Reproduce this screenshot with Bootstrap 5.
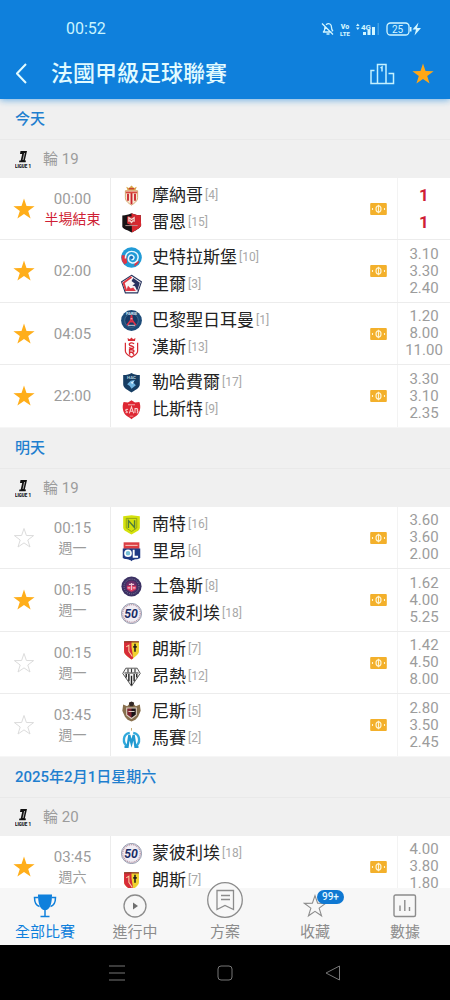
<!DOCTYPE html>
<html lang="zh-Hant">
<head>
<meta charset="utf-8">
<meta name="viewport" content="width=device-width, initial-scale=1">
<title>法國甲級足球聯賽</title>
<link href="https://cdn.jsdelivr.net/npm/bootstrap@5.3.0/dist/css/bootstrap.min.css" rel="stylesheet">
<style>
  :root { --brand:#0f80dc; --gold:#ffae1a; --muted:#9c9c9c; --rule:#ececec; }
  body { font-family: Roboto, "Noto Sans CJK TC", sans-serif; font-size:15px; line-height:20px; color:#222; background:#fff; }
  .screen { height:100vh; }
  button { background:none; border:0; padding:0; line-height:0; }
  svg { display:block; flex:none; }

  .app-head { background:var(--brand); box-shadow:0 1px 7px rgba(15,128,220,.6); z-index:2; padding-bottom:5px; }
  .status-line { padding:20px 28px 0 66px; height:54px; color:#c9f4ff; font-size:16px; line-height:18px; }
  .title-line { height:40px; padding:0 16px; color:#e2fbff; }
  .title-line h1 { font-size:22px; line-height:30px; font-weight:500; margin:0 0 0 24px; }
  .league-fav { color:#ffa716; }

  .feed { overflow-y:auto; scrollbar-width:none; min-height:0; }
  .feed::-webkit-scrollbar { display:none; }
  .day-name { height:41px; padding:0 15px; margin:0; background:#f0f0f0; border-bottom:1px solid #e9e9e9; color:#1f7fcf; font-size:15px; line-height:20px; font-weight:500; }
  .round-name { height:38px; padding:0 15px; background:#f0f0f0; color:var(--muted); }

  .match { height:62px; border-bottom:1px solid var(--rule); }
  .match:nth-child(even) { height:63px; }
  .match:last-child { border-bottom-color:#f6f6f6; }
  .fav { width:48px; color:var(--gold); }
  .fav svg { margin:auto; }
  .fav.unset { color:#dcdcdc; }
  .when { width:49px; color:var(--muted); white-space:nowrap; }
  .when small { font-size:14px; }
  .sides { border-left:1px solid var(--rule); margin-left:13px; padding-left:10px; line-height:27px; font-size:17px; }
  .side-name { margin-left:10px; }
  .rank { margin-left:2px; color:#a8a8a8; font-size:12px; }
  .odds { width:53px; margin-left:10px; border-left:1px solid #f3f3f3; color:var(--muted); line-height:17px; }
  .odds.score { font-size:17px; line-height:27px; font-weight:700; }
  .live, .odds.score { color:#cf1f35; }

  .tabs { height:57px; background:#f7f7f7; z-index:2; }
  .tabs a { color:#8c8c8c; text-decoration:none; padding-bottom:3px; }
  .tabs a.current { color:var(--brand); }
  .tabs svg { margin-bottom:4px; }
  .count { left:50%; top:2px; height:14px; margin-left:2px; padding:0 5px; border-radius:7px; background:#0f78d2; color:#e6f8ff; font-size:10px; line-height:14px; font-weight:500; }
  .sys { height:55px; background:#000; padding:0 63px; }
</style>
</head>
<body>

<svg class="d-none" aria-hidden="true">
  <symbol id="star" viewBox="0 0 22 22"><path fill="currentColor" d="M11 .5l2.500 7.500 8.100.2-6.400 4.800 2.400 7.600L11 15.900l-6.600 4.700 2.400-7.600L.4 8.200 8.500 8z"/></symbol>
  <symbol id="star-line" viewBox="0 0 22 22"><path fill="none" stroke="currentColor" d="M11 1.500l2.400 7 7.200.1-5.800 4.400 2.200 7L11 15.900 5 20l2.200-7L1.400 8.600l7.200-.1z"/></symbol>
  <symbol id="ticket" viewBox="0 0 18 13"><rect width="18" height="13" rx="1" fill="#f3b02b"/><ellipse cx="9" cy="6.500" rx="2.700" ry="3.300" fill="none" stroke="#fff3cf" stroke-width="1.300"/><path stroke="#fff3cf" stroke-width="1.200" d="M9 2v9M2.500 5.500v2M15.500 5.500v2"/></symbol>
  <symbol id="ligue" viewBox="0 0 16 18"><path fill="#111" d="M5.500 1H12L9.800 10.500H11l-.4 1.700H4l.4-1.700h1.300L7.200 4H5z"/><path stroke="#f0f0f0" stroke-width=".7" d="M9.600 3L8 10"/><text x="8" y="17.500" font-size="4.500" font-weight="900" text-anchor="middle" fill="#111">LIGUE 1</text></symbol>

  <symbol id="monaco" viewBox="0 0 24 24"><path fill="#d9a54a" d="M7.500 6L6 2l3 1.500L12 .5l3 3L18 2l-1.500 4z"/><path fill="#c83b31" d="M9 3.500h6v1.500H9z"/><path fill="#f6e6d3" stroke="#d0a060" d="M5 6.500h14v8c0 4-4 6.500-7 8.500-3-2-7-4.500-7-8.500z"/><path stroke="#c9252c" stroke-width="2.100" d="M8 10v8M12 9v13M16 10v8"/><path stroke="#d84b3e" stroke-width="2" d="M5.500 8.500h13"/></symbol>
  <symbol id="rennes" viewBox="0 0 24 24"><path fill="#161214" d="M1.500 4C6 4 8 3 12 1.500 16 3 18 4 22.500 3.500l.5 12C22 19 16 21 12.500 23.500 9 21 3.500 20 1.500 17z"/><path fill="#d92830" d="M12 1.500C16 3 18 4 22.500 3.500l.5 12C22 19 16 21 12.500 23.500z"/><path fill="#c92b32" d="M7 5h10v7l-5 3-5-2z"/><path fill="none" stroke="#f5d9d2" stroke-width="1.400" d="M9 11V6.500l3 2 3-2V11M10 9.500l2 2.500 2-2.500"/><path stroke="#b99" d="M5 15.500h14"/></symbol>
  <symbol id="strasbourg" viewBox="0 0 24 24"><circle cx="12" cy="12" r="11.800" fill="#219bd7"/><path fill="#df3544" d="M1 9l5 1 1 8-3 2C1 17 0 13 1 9zM16 17l5-1c-1 3-3 5-6 6z"/><path fill="none" stroke="#e8f6ff" stroke-width="1.700" d="M5 13c0-5 3-8 7-8 5 0 8 3 7.500 7.500C19 17 15 19 12 18c-3-1-4-3-3.500-5.500C9 10 11 8.500 13 9.500c2 1 2.500 3 1 4.500l-2 .5"/><path fill="#2269b2" d="M10 12l2-2 2 2-2 2z"/></symbol>
  <symbol id="lille" viewBox="0 0 24 24"><path fill="#f9f4f5" stroke="#27345e" stroke-width="1.300" d="M12 1.500L23.300 9l-4.300 12.500H5L.7 9z"/><path fill="none" stroke="#e0353f" stroke-width="2.200" d="M12 3.500L3 10l3 9.500"/><path fill="#28325f" d="M14 4.500L21.500 10l-3 9.500-2.500-5.500-3-1 3-2-4-3z"/><path fill="#de3745" d="M6 19.500l2-6 3 3 3-1 3 4z"/></symbol>
  <symbol id="psg" viewBox="0 0 24 24"><circle cx="12" cy="12" r="11.900" fill="#1d4b78"/><circle cx="12" cy="12" r="7.800" fill="#173b68" stroke="#5a7f9f" stroke-width=".7"/><path fill="none" stroke="#dc3148" stroke-width="1.800" d="M12 6l-1 6-4 5.500M12 6l1 6 4 5.500M9.500 13.500h5"/><path stroke="#e9dfe4" d="M8 17.500h8M11 10h2"/><text x="12" y="5.500" font-size="4.500" font-weight="700" text-anchor="middle" fill="#d4e5f2">PARIS</text></symbol>
  <symbol id="reims" viewBox="0 0 24 24"><path fill="#d72c34" d="M8 4.500L7.500 1 10 2.500l2-2 2 2L16.500 1 16 4.500z"/><path fill="none" stroke="#d72c34" stroke-width="1.400" d="M5 6.500V16c0 4 4.500 5.500 7 7 2.500-1.500 7-3 7-7V6.500"/><path fill="none" stroke="#d72c34" stroke-width="1.600" d="M14.800 8c-1-2-5.800-1.500-5.300.7.300 2 5 1.300 5 3.300 0 1.500-4 1.500-5.200 0M9.800 20.300v-5.800h2.500c3.200 0 3.200 3 0 3H9.800m3 0l2.200 2.800"/></symbol>
  <symbol id="lehavre" viewBox="0 0 24 24"><path fill="#163d63" d="M2.500 3.500C7 3.500 9 2.500 12 1c3 1.500 5 2.500 9.500 2.500V14c0 5-6.500 7-9.500 9.500C9 21 2.500 19 2.500 14z"/><path fill="#6fb3df" d="M7 14l4-4 5-1-2 3 3 3-5 4-2-3z"/><path fill="#d7effc" d="M11 12l4-2-2 4z"/><text x="12" y="8" font-size="5" font-weight="700" text-anchor="middle" fill="#b7cfdf">HAC</text></symbol>
  <symbol id="brest" viewBox="0 0 24 24"><path fill="#de2733" d="M3 3.500l5 .5 4-2.500L16 4l5-.5c2 5 1 11-2 14.500-2 2-5 3-7 5-2-2-5-3-7-5-3-3.500-4-9.500-2-14.500z"/><path fill="none" stroke="#fbd0d0" stroke-width="1.200" d="M8 12c-2-1-3.500.5-2 1.800 2 1 1.500 2.500-.8 1.500M9.500 16.500L12 9l2.500 7.500M10 14h4M16 16V11h2c1.500 0 1.500 2.500 0 2.500 2 0 1.500 2.500 0 2.500"/><path fill="#f1a8a9" d="M8 6h8v1H8zM10 19h4v1h-4z"/></symbol>
  <symbol id="nantes" viewBox="0 0 24 24"><path fill="#d5e20c" d="M2.500 2.500l9.500-1 9.500 1V16c-1 4-5.500 4.500-9.500 7.500C8 20.500 3.500 20 2.500 16z"/><path fill="none" stroke="#8a9d17" d="M6 5h12v11l-6 4-6-4z"/><path fill="none" stroke="#4f7d3b" stroke-width="1.600" d="M8.500 16V7.500l7 8V7"/></symbol>
  <symbol id="lyon" viewBox="0 0 24 24"><path fill="#db3d43" d="M3 1.500h18V9H3z"/><path stroke="#f7c5bd" stroke-width="1.200" d="M5 5h14"/><path fill="#203a84" d="M2 8.500h20v11c-3 2-7.500 1-10 3.500-2.500-2.500-7-1.500-10-3.500z"/><circle cx="8" cy="14" r="3.500" fill="#77c0d8" stroke="#fff" stroke-width="1.800"/><path fill="none" stroke="#fff" stroke-width="2.200" d="M14.500 10v8h5"/></symbol>
  <symbol id="toulouse" viewBox="0 0 24 24"><circle cx="12" cy="12" r="11.500" fill="#3b3163"/><circle cx="12" cy="12" r="8.500" fill="none" stroke="#9c91ad" stroke-dasharray="1 1.500"/><circle cx="12" cy="12" r="6.800" fill="#672c67"/><path fill="#e23c5d" d="M7 11h10v4l-5 3-5-3z"/><path stroke="#f1c3d2" stroke-width="1.400" d="M7.500 13.500h3M12 8v8M13.500 13.500h3M9 9.500h6"/></symbol>
  <symbol id="montpellier" viewBox="0 0 24 24"><circle cx="12" cy="12" r="11.500" fill="#f0edf4" stroke="#66718d" stroke-width=".8"/><circle cx="12" cy="12" r="10" fill="none" stroke="#b08796" stroke-width="1.200" stroke-dasharray="1.200 1"/><text x="11.500" y="17" font-size="14" font-weight="700" font-style="italic" text-anchor="middle" fill="#192c66">50</text></symbol>
  <symbol id="lens" viewBox="0 0 24 24"><path fill="#efd32f" d="M3.500 3c6-1 11-1 17 0v11c0 4-4.500 6-8.500 9.500C8 20 3.500 18 3.500 14z"/><path fill="#d72b39" d="M3.500 3l8.500-.7v7L14 22l-2 1.500C8 20 3.500 18 3.500 14z"/><path fill="none" stroke="#f7d6a2" stroke-width="1.200" d="M6 9l3-2v7l4 6"/><path stroke="#25211a" stroke-width="1.800" d="M16 5.500v9M14 9h4"/><path fill="#8a3a2a" d="M3.500 2.500h17v1.500h-17z"/></symbol>
  <symbol id="angers" viewBox="0 0 24 24"><path fill="#f5f5f5" stroke="#444" d="M5.500 2.500h13l3.500 6L12 23 2 8.500z"/><path stroke="#333" stroke-width="1.300" d="M4 8h16M8 3v4M12 3v4M16 3v4"/><path stroke="#222" stroke-width="1.600" d="M6 9v4M9 9v8.500M12 11v11M15 9v8.500M18 9v4"/></symbol>
  <symbol id="nice" viewBox="0 0 24 24"><path fill="#876f4d" d="M2.500 4L7 6l2-2 1-2.500h4L15 4l2 2 4.500-2 1 7-3 7-3 3.500-4.500 2-4.500-2-3-3.500-3-7z"/><path fill="#332826" d="M9 2l3-1.500L15 2l-1 4h-4z"/><path fill="#7d2530" d="M7 8h10v8l-5 4-5-4z"/><path fill="#191416" d="M12 8h5v8l-5 4z"/><path stroke="#ded2c6" stroke-width="1.200" d="M6.500 8h11v8L12 20l-5.500-4zM8.500 12h7" fill="none"/></symbol>
  <symbol id="marseille" viewBox="0 0 24 24"><path fill="none" stroke="#31a9dc" stroke-width="2.700" d="M10 5.500c-8 1-9 12-2 15.500M14 5.500c8 1 9 12 2 15.500"/><path fill="none" stroke="#2199d0" stroke-width="2.600" d="M4 21.500h3.500L9.500 8l2.500 9.500L14.500 8l2 13.500H20"/><path stroke="#bda367" d="M12 0v3"/></symbol>
</svg>

<div class="screen d-flex flex-column overflow-hidden">
  <header class="app-head position-relative">
    <div class="status-line d-flex justify-content-between">
      <span>00:52</span>
      <svg width="102" height="18" viewBox="320 20 102 18" fill="none" stroke="#d3f6ff" aria-hidden="true">
        <path stroke-width="1.300" d="M322 23.500l11 11M324 32h7.500M323 32.500c2-1.500 2-3 2-6M326 24.800c3-2.500 5.500-.5 5.500 2.500 0 1.500.3 3 1.500 4M326.500 34h3"/>
        <g fill="#d3f6ff" stroke="none">
          <text x="345" y="29" font-size="7" font-weight="900" text-anchor="middle">Vo</text>
          <text x="345" y="35.500" font-size="6" font-weight="900" text-anchor="middle">LTE</text>
          <text x="361" y="29.500" font-size="8" font-weight="700">4G</text>
          <path d="M356 26l1.800-2.500 1.800 2.500zM356 27.500l1.800 2.500 1.800-2.500zM363 32h3v3h-3zM367.500 30h3v5h-3zM372 27h3v8h-3z"/>
          <path opacity=".25" d="M377.500 23h1.500v12h-1.500z"/>
          <text x="397.500" y="32.500" font-size="10" text-anchor="middle">25</text>
          <path d="M410 27h1.500v4.500H410zM418.500 22.500l-6 7h3.500l-1.500 6 6.500-7.500h-4z"/>
        </g>
        <rect x="387" y="23" width="22" height="12" rx="3.500" stroke-width="1.300"/>
      </svg>
    </div>
    <div class="title-line d-flex align-items-center">
      <button type="button" aria-label="返回"><svg width="11" height="22" viewBox="0 0 11 22" fill="none" stroke="#e2fbff" stroke-width="2"><path d="M10 1L1 10.500 10 20"/></svg></button>
      <h1 class="flex-grow-1 text-nowrap">法國甲級足球聯賽</h1>
      <button type="button" aria-label="排名" class="me-3"><svg width="26" height="22" viewBox="0 0 26 22" fill="none" stroke="#c4f1ff" stroke-width="1.500"><path d="M7.500 20.500V1.500H16v19M4.500 7.500H1v13h22.500V10.500h-5M10.500 5l1.500-1v4.500"/></svg></button>
      <button type="button" aria-label="收藏聯賽" class="league-fav"><svg width="22" height="22"><use href="#star"/></svg></button>
    </div>
  </header>

  <main class="feed flex-grow-1">
    <section>
      <h2 class="day-name d-flex align-items-center">今天</h2>
      <div class="round-name d-flex align-items-center"><svg width="16" height="18"><use href="#ligue"/></svg><span class="ms-2 ps-1">輪 19</span></div>
      <div>
        <article class="match d-flex align-items-stretch">
          <button type="button" class="fav" aria-label="收藏"><svg width="22" height="22"><use href="#star"/></svg></button>
          <div class="when d-flex flex-column align-items-center justify-content-center"><time>00:00</time><small class="live">半場結束</small></div>
          <div class="sides flex-grow-1 d-flex flex-column justify-content-center">
            <div class="d-flex align-items-center"><svg width="21" height="21"><use href="#monaco"/></svg><span class="side-name">摩納哥</span><span class="rank">[4]</span></div>
            <div class="d-flex align-items-center"><svg width="21" height="21"><use href="#rennes"/></svg><span class="side-name">雷恩</span><span class="rank">[15]</span></div>
          </div>
          <svg class="align-self-center" width="17" height="12"><use href="#ticket"/></svg>
          <div class="odds score d-flex flex-column align-items-center justify-content-center"><span>1</span><span>1</span></div>
        </article>
        <article class="match d-flex align-items-stretch">
          <button type="button" class="fav" aria-label="收藏"><svg width="22" height="22"><use href="#star"/></svg></button>
          <div class="when d-flex flex-column align-items-center justify-content-center"><time>02:00</time></div>
          <div class="sides flex-grow-1 d-flex flex-column justify-content-center">
            <div class="d-flex align-items-center"><svg width="21" height="21"><use href="#strasbourg"/></svg><span class="side-name">史特拉斯堡</span><span class="rank">[10]</span></div>
            <div class="d-flex align-items-center"><svg width="21" height="21"><use href="#lille"/></svg><span class="side-name">里爾</span><span class="rank">[3]</span></div>
          </div>
          <svg class="align-self-center" width="17" height="12"><use href="#ticket"/></svg>
          <div class="odds d-flex flex-column align-items-center justify-content-center"><span>3.10</span><span>3.30</span><span>2.40</span></div>
        </article>
        <article class="match d-flex align-items-stretch">
          <button type="button" class="fav" aria-label="收藏"><svg width="22" height="22"><use href="#star"/></svg></button>
          <div class="when d-flex flex-column align-items-center justify-content-center"><time>04:05</time></div>
          <div class="sides flex-grow-1 d-flex flex-column justify-content-center">
            <div class="d-flex align-items-center"><svg width="21" height="21"><use href="#psg"/></svg><span class="side-name">巴黎聖日耳曼</span><span class="rank">[1]</span></div>
            <div class="d-flex align-items-center"><svg width="21" height="21"><use href="#reims"/></svg><span class="side-name">漢斯</span><span class="rank">[13]</span></div>
          </div>
          <svg class="align-self-center" width="17" height="12"><use href="#ticket"/></svg>
          <div class="odds d-flex flex-column align-items-center justify-content-center"><span>1.20</span><span>8.00</span><span>11.00</span></div>
        </article>
        <article class="match d-flex align-items-stretch">
          <button type="button" class="fav" aria-label="收藏"><svg width="22" height="22"><use href="#star"/></svg></button>
          <div class="when d-flex flex-column align-items-center justify-content-center"><time>22:00</time></div>
          <div class="sides flex-grow-1 d-flex flex-column justify-content-center">
            <div class="d-flex align-items-center"><svg width="21" height="21"><use href="#lehavre"/></svg><span class="side-name">勒哈費爾</span><span class="rank">[17]</span></div>
            <div class="d-flex align-items-center"><svg width="21" height="21"><use href="#brest"/></svg><span class="side-name">比斯特</span><span class="rank">[9]</span></div>
          </div>
          <svg class="align-self-center" width="17" height="12"><use href="#ticket"/></svg>
          <div class="odds d-flex flex-column align-items-center justify-content-center"><span>3.30</span><span>3.10</span><span>2.35</span></div>
        </article>
      </div>
    </section>

    <section>
      <h2 class="day-name d-flex align-items-center">明天</h2>
      <div class="round-name d-flex align-items-center"><svg width="16" height="18"><use href="#ligue"/></svg><span class="ms-2 ps-1">輪 19</span></div>
      <div>
        <article class="match d-flex align-items-stretch">
          <button type="button" class="fav unset" aria-label="收藏"><svg width="22" height="22"><use href="#star-line"/></svg></button>
          <div class="when d-flex flex-column align-items-center justify-content-center"><time>00:15</time><small>週一</small></div>
          <div class="sides flex-grow-1 d-flex flex-column justify-content-center">
            <div class="d-flex align-items-center"><svg width="21" height="21"><use href="#nantes"/></svg><span class="side-name">南特</span><span class="rank">[16]</span></div>
            <div class="d-flex align-items-center"><svg width="21" height="21"><use href="#lyon"/></svg><span class="side-name">里昂</span><span class="rank">[6]</span></div>
          </div>
          <svg class="align-self-center" width="17" height="12"><use href="#ticket"/></svg>
          <div class="odds d-flex flex-column align-items-center justify-content-center"><span>3.60</span><span>3.60</span><span>2.00</span></div>
        </article>
        <article class="match d-flex align-items-stretch">
          <button type="button" class="fav" aria-label="收藏"><svg width="22" height="22"><use href="#star"/></svg></button>
          <div class="when d-flex flex-column align-items-center justify-content-center"><time>00:15</time><small>週一</small></div>
          <div class="sides flex-grow-1 d-flex flex-column justify-content-center">
            <div class="d-flex align-items-center"><svg width="21" height="21"><use href="#toulouse"/></svg><span class="side-name">土魯斯</span><span class="rank">[8]</span></div>
            <div class="d-flex align-items-center"><svg width="21" height="21"><use href="#montpellier"/></svg><span class="side-name">蒙彼利埃</span><span class="rank">[18]</span></div>
          </div>
          <svg class="align-self-center" width="17" height="12"><use href="#ticket"/></svg>
          <div class="odds d-flex flex-column align-items-center justify-content-center"><span>1.62</span><span>4.00</span><span>5.25</span></div>
        </article>
        <article class="match d-flex align-items-stretch">
          <button type="button" class="fav unset" aria-label="收藏"><svg width="22" height="22"><use href="#star-line"/></svg></button>
          <div class="when d-flex flex-column align-items-center justify-content-center"><time>00:15</time><small>週一</small></div>
          <div class="sides flex-grow-1 d-flex flex-column justify-content-center">
            <div class="d-flex align-items-center"><svg width="21" height="21"><use href="#lens"/></svg><span class="side-name">朗斯</span><span class="rank">[7]</span></div>
            <div class="d-flex align-items-center"><svg width="21" height="21"><use href="#angers"/></svg><span class="side-name">昂熱</span><span class="rank">[12]</span></div>
          </div>
          <svg class="align-self-center" width="17" height="12"><use href="#ticket"/></svg>
          <div class="odds d-flex flex-column align-items-center justify-content-center"><span>1.42</span><span>4.50</span><span>8.00</span></div>
        </article>
        <article class="match d-flex align-items-stretch">
          <button type="button" class="fav unset" aria-label="收藏"><svg width="22" height="22"><use href="#star-line"/></svg></button>
          <div class="when d-flex flex-column align-items-center justify-content-center"><time>03:45</time><small>週一</small></div>
          <div class="sides flex-grow-1 d-flex flex-column justify-content-center">
            <div class="d-flex align-items-center"><svg width="21" height="21"><use href="#nice"/></svg><span class="side-name">尼斯</span><span class="rank">[5]</span></div>
            <div class="d-flex align-items-center"><svg width="21" height="21"><use href="#marseille"/></svg><span class="side-name">馬賽</span><span class="rank">[2]</span></div>
          </div>
          <svg class="align-self-center" width="17" height="12"><use href="#ticket"/></svg>
          <div class="odds d-flex flex-column align-items-center justify-content-center"><span>2.80</span><span>3.50</span><span>2.45</span></div>
        </article>
      </div>
    </section>

    <section>
      <h2 class="day-name d-flex align-items-center">2025年2月1日星期六</h2>
      <div class="round-name d-flex align-items-center"><svg width="16" height="18"><use href="#ligue"/></svg><span class="ms-2 ps-1">輪 20</span></div>
      <div>
        <article class="match d-flex align-items-stretch">
          <button type="button" class="fav" aria-label="收藏"><svg width="22" height="22"><use href="#star"/></svg></button>
          <div class="when d-flex flex-column align-items-center justify-content-center"><time>03:45</time><small>週六</small></div>
          <div class="sides flex-grow-1 d-flex flex-column justify-content-center">
            <div class="d-flex align-items-center"><svg width="21" height="21"><use href="#montpellier"/></svg><span class="side-name">蒙彼利埃</span><span class="rank">[18]</span></div>
            <div class="d-flex align-items-center"><svg width="21" height="21"><use href="#lens"/></svg><span class="side-name">朗斯</span><span class="rank">[7]</span></div>
          </div>
          <svg class="align-self-center" width="17" height="12"><use href="#ticket"/></svg>
          <div class="odds d-flex flex-column align-items-center justify-content-center"><span>4.00</span><span>3.80</span><span>1.80</span></div>
        </article>
      </div>
    </section>
  </main>

  <nav class="tabs d-flex flex-shrink-0 position-relative">
    <a href="#" class="current col d-flex flex-column align-items-center justify-content-end" aria-current="page">
      <svg width="24" height="24" viewBox="0 0 24 24"><path fill="currentColor" d="M5 .5h14c0 8-1.500 14-5.500 15.500h-3C6.500 14.500 5 8.500 5 .5z"/><path fill="none" stroke="currentColor" stroke-width="1.500" d="M5 3.500H1.500c0 5 1 8 5 9M19 3.500h3.500c0 5-1 8-5 9M12 15v7M7.500 22.500h9"/></svg>全部比賽</a>
    <a href="#" class="col d-flex flex-column align-items-center justify-content-end">
      <svg width="24" height="24" viewBox="0 0 24 24"><circle cx="12" cy="12" r="11" fill="none" stroke="currentColor" stroke-width="1.300"/><path fill="#6f6f6f" d="M10 8.500l5 3.500-5 3.500z"/></svg>進行中</a>
    <a href="#" class="col d-flex flex-column align-items-center justify-content-end">
      <svg width="36" height="36" viewBox="0 0 36 36" fill="none" stroke="currentColor" stroke-width="1.300"><circle cx="18" cy="18" r="17.300" fill="#f8f8f8"/><path d="M10 8.500h16.500v19L18 23.500l-8 4zM14 13.500h9M14 17.500h9"/></svg>方案</a>
    <a href="#" class="col d-flex flex-column align-items-center justify-content-end position-relative">
      <svg width="24" height="24"><use href="#star-line"/></svg>收藏<span class="count position-absolute">99+</span></a>
    <a href="#" class="col d-flex flex-column align-items-center justify-content-end">
      <svg width="24" height="24" viewBox="0 0 24 24" fill="none" stroke="currentColor" stroke-width="1.400"><rect x="1" y="1" width="21.500" height="21.500" rx="1.500"/><path d="M7 11.500V17M11.800 6v11M16.500 13v4"/></svg>數據</a>
  </nav>

  <div class="sys d-flex align-items-center flex-shrink-0">
    <button type="button" class="col" aria-label="選單"><svg class="mx-auto" width="16" height="16" viewBox="0 0 16 16" stroke="#777" stroke-width="1.200"><path d="M0 1h16M0 8h16M0 15h16"/></svg></button>
    <button type="button" class="col" aria-label="主畫面"><svg class="mx-auto" width="16" height="16" viewBox="0 0 16 16" fill="none" stroke="#777"><rect x="1" y="1" width="14" height="14" rx="3"/></svg></button>
    <button type="button" class="col" aria-label="上一頁"><svg class="mx-auto" width="16" height="16" viewBox="0 0 16 16" fill="none" stroke="#777" stroke-linejoin="round"><path d="M1 8l13.500-7v14z"/></svg></button>
  </div>
</div>

<script src="https://cdn.jsdelivr.net/npm/bootstrap@5.3.0/dist/js/bootstrap.bundle.min.js"></script>
</body>
</html>
